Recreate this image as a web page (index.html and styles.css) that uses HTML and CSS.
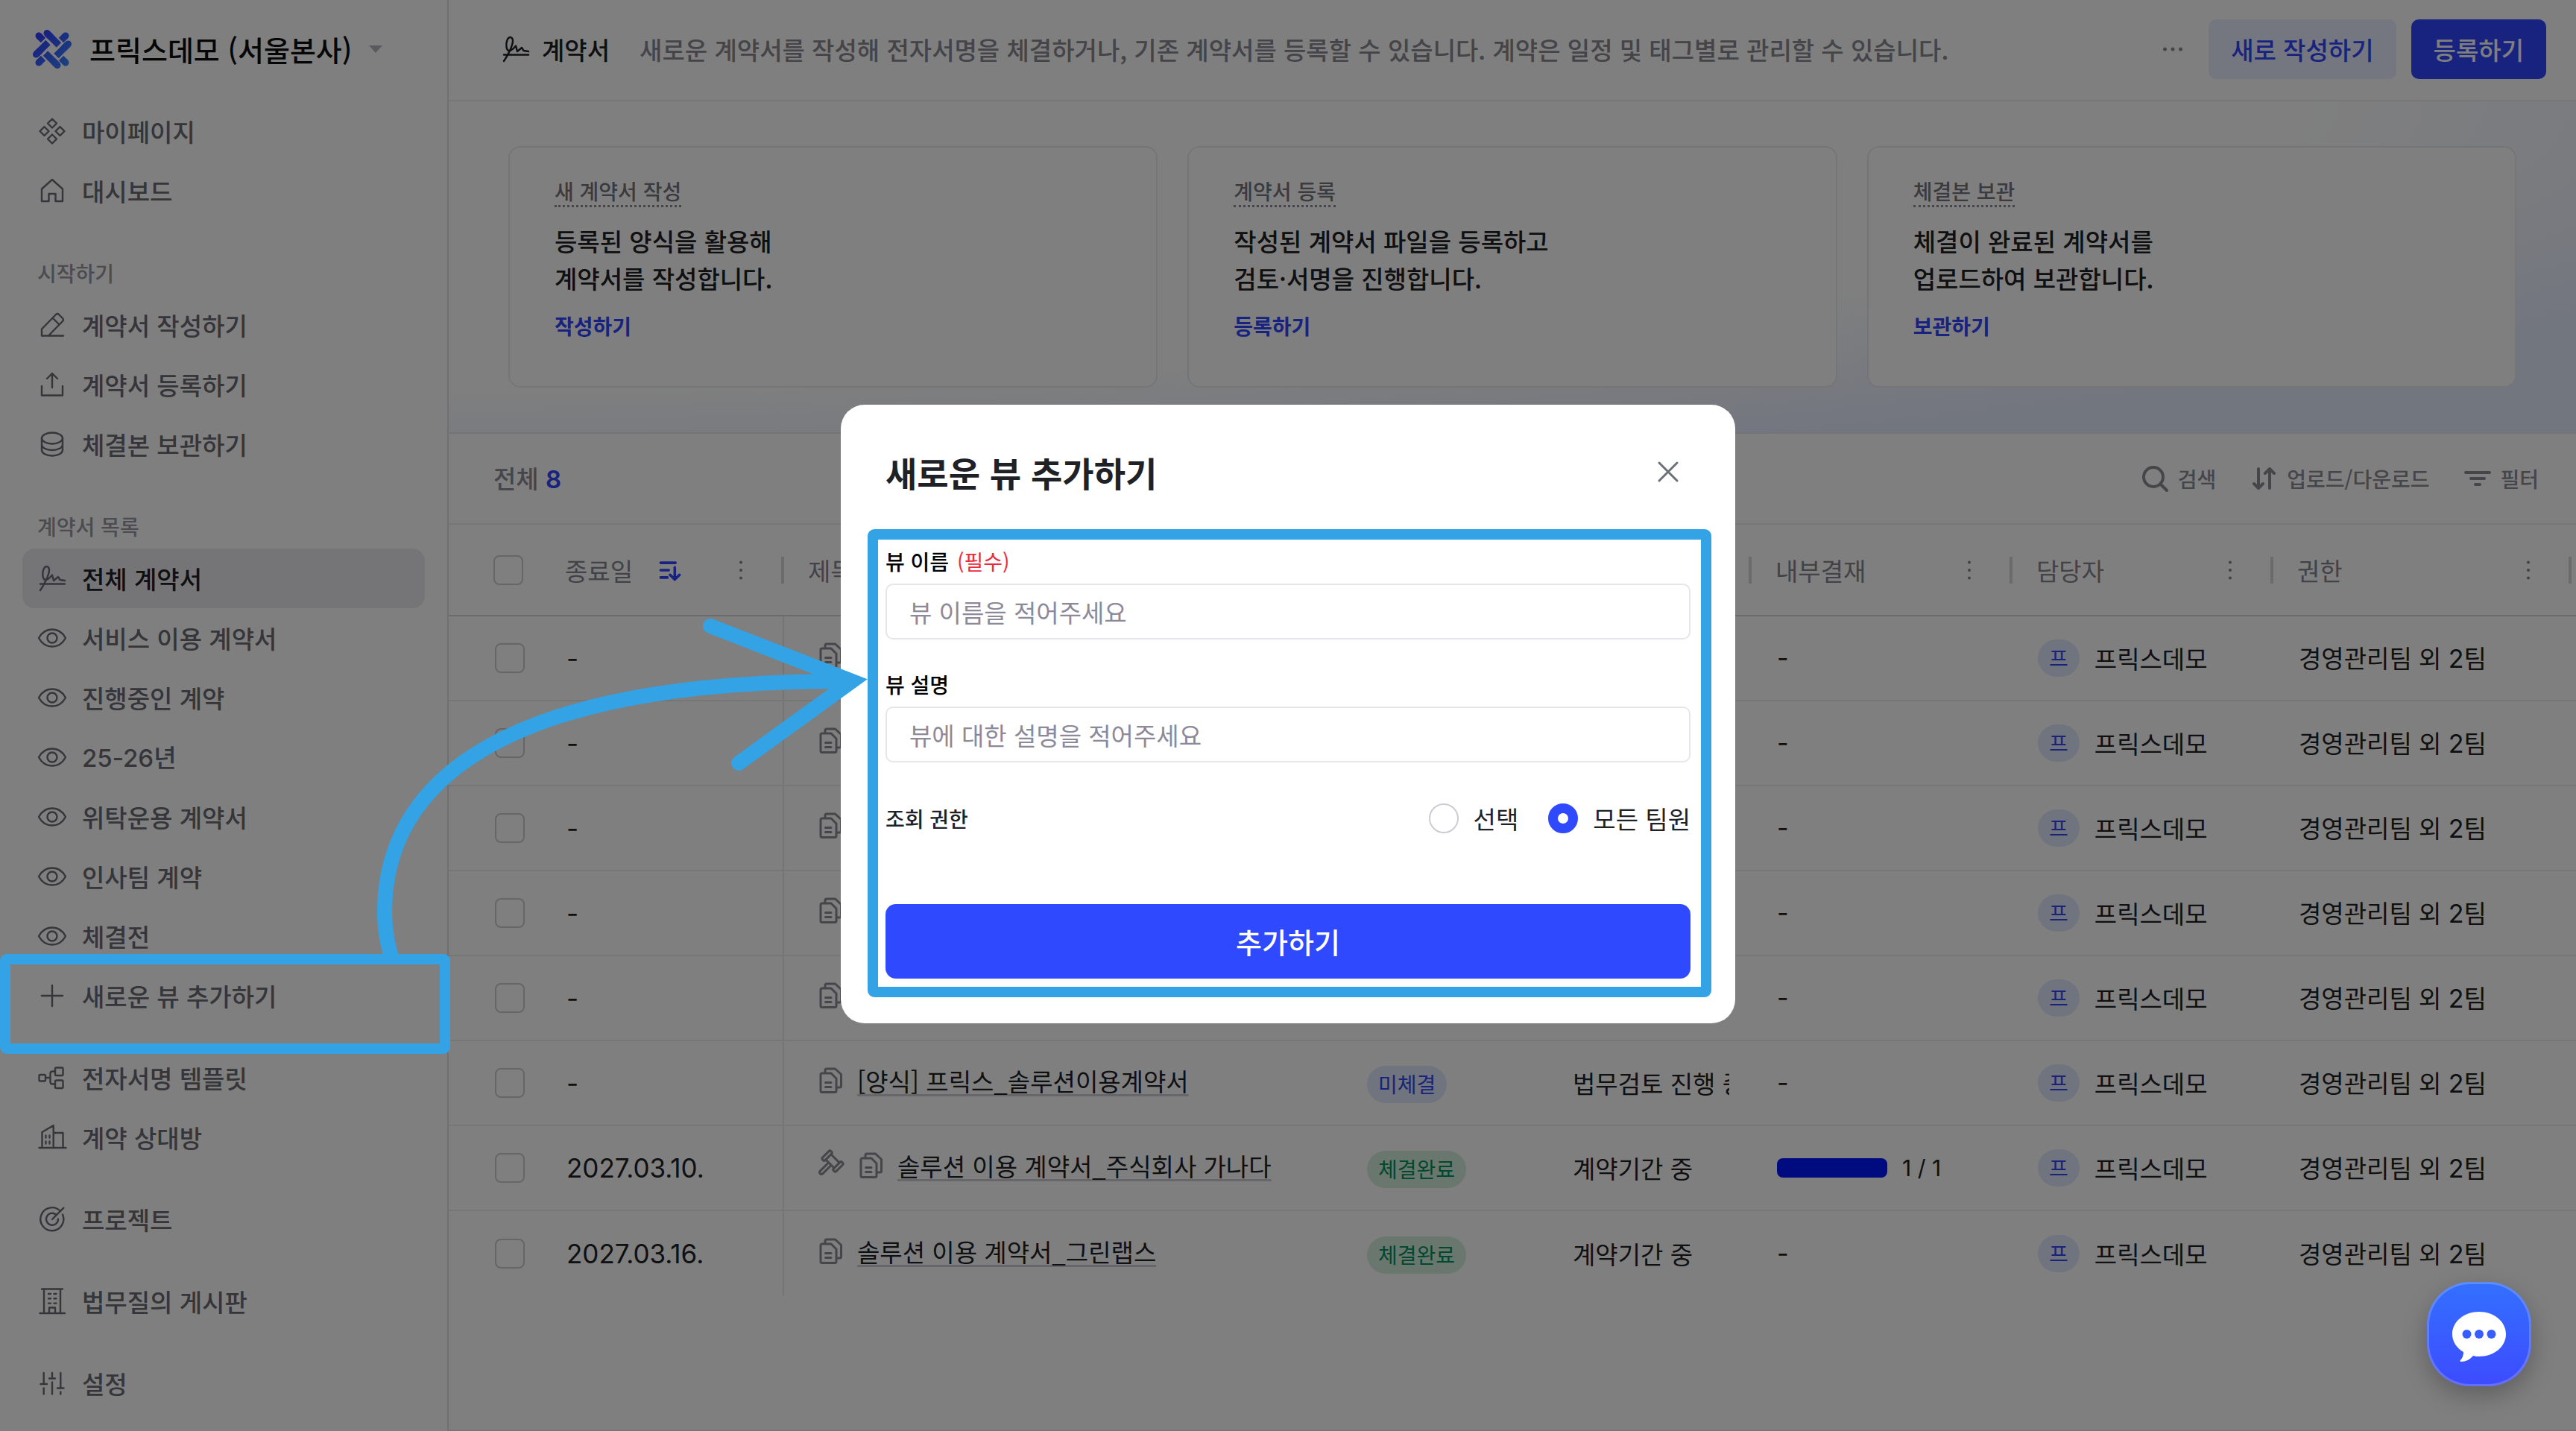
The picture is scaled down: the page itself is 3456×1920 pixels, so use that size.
FILE: index.html
```html
<!DOCTYPE html>
<html lang="ko">

<head>
  <meta charset="UTF-8">
  <title>계약서</title>
  <link rel="stylesheet" href="styles.css">
</head>

<body>
  <svg class="sprite" aria-hidden="true">
    <defs>
      <linearGradient id="logoFill" x1="0" y1="0" x2="52" y2="52" gradientUnits="userSpaceOnUse">
        <stop offset="0" stop-color="#2f33ff" />
        <stop offset="1" stop-color="#3d8aff" />
      </linearGradient>
    </defs>
    <symbol id="i-apps" viewBox="0 0 40 40">
      <path d="M20 3.500l6 6-6 6-6-6zM20 24.500l6 6-6 6-6-6zM9.500 14l6 6-6 6-6-6zM30.500 14l6 6-6 6-6-6z" />
    </symbol>
    <symbol id="i-home" viewBox="0 0 40 40">
      <path d="M6 34V17.500L20 5l14 12.500V34H24.500V24h-9v10z" />
    </symbol>
    <symbol id="i-pencil" viewBox="0 0 40 40">
      <path d="M35 34.500H6V25.500L25 6q2-2 4 0l5 5q2 2 0 4L15 34.500M20.500 10.500l9 9" />
    </symbol>
    <symbol id="i-upload" viewBox="0 0 40 40">
      <path d="M20 24V5M13 12l7-7 7 7M6 22v12.500h28V22" />
    </symbol>
    <symbol id="i-db" viewBox="0 0 40 40">
      <ellipse cx="20" cy="12" rx="14" ry="7.500" />
      <path d="M6 12v16c0 4 6 7.500 14 7.500s14-3.500 14-7.500V12M6 20.500c0 4 6 7.500 14 7.500s14-3.500 14-7.500" />
    </symbol>
    <symbol id="i-sign" viewBox="0 0 40 40">
      <path d="M4 36C9 29 16 15 16 9C16 5.500 14.500 4 12.500 4C9 4 6.500 11 7.500 17C8.500 24 13 24 20 15.500L22 23L28 18L30.500 22L37 23M4 27.500H37" />
    </symbol>
    <symbol id="i-eye" viewBox="0 0 40 40">
      <path d="M2 20C6 12.500 12 8.500 20 8.500S34 12.500 38 20C34 27.500 28 31.500 20 31.500S6 27.500 2 20Z" />
      <circle cx="20" cy="20" r="6.500" />
    </symbol>
    <symbol id="i-plus" viewBox="0 0 40 40">
      <path d="M20 6v28M6 20h28" />
    </symbol>
    <symbol id="i-flow" viewBox="0 0 40 40">
      <rect x="2.500" y="16" width="8.500" height="8.500" rx="1.500" />
      <rect x="24" y="6.500" width="10.500" height="10.500" rx="1.500" />
      <rect x="24" y="23.500" width="10.500" height="10.500" rx="1.500" />
      <path d="M11 20h6.500M24 11.500h-3.500q-3 0-3 3v11q0 3 3 3h3.500" />
    </symbol>
    <symbol id="i-company" viewBox="0 0 40 40">
      <path d="M2.500 34h36M6.500 34V13L21.700 4v30M21.700 14H34.500v20M11.500 17.500v3M16.500 17.500v3M11.500 25.500v3M16.500 25.500v3" />
    </symbol>
    <symbol id="i-target" viewBox="0 0 40 40">
      <path d="M30.500 8.500A15.500 15.500 0 1 0 34 13.500M25 13.500A8 8 0 1 0 28 19.500M20 20L35.300 4.700" />
    </symbol>
    <symbol id="i-board" viewBox="0 0 40 40">
      <path d="M6 3.500h28M9 3.500v32.500M31 3.500v32.500M3.500 36h33.500M16 36v-7.500h8V36M15 10h3M22.500 10h3M15 16.300h3M22.500 16.300h3M15 22.600h3M22.500 22.600h3" />
    </symbol>
    <symbol id="i-settings" viewBox="0 0 40 40">
      <path d="M8.700 6v15M4.500 21h8.500M8.700 26.500v8M20 6v7.500M16 13.500h8M20 18.500v16M31.300 6v20.500M27 26.500h8.500M31.300 31.500v3" />
    </symbol>
    <symbol id="i-docs" viewBox="0 0 36 36">
      <path d="M5 10q0-2 2-2h12l7 7v16.500q0 2-2 2H7q-2 0-2-2zM11 7.500V4q0-2 2-2h11.500l8 7.500V25q0 2-2 2h-3.500M11.500 20.500h7.500M11.500 26.500h7.500" />
    </symbol>
    <symbol id="i-gavel" viewBox="0 0 36 36">
      <g transform="rotate(45 21 12)">
        <rect x="8" y="4" width="5" height="16" rx="2" />
        <rect x="29" y="4" width="5" height="16" rx="2" />
        <path d="M13 7h16M13 17h16M18.500 17v16q0 2.500 2.500 2.500t2.500-2.500V17" />
      </g>
    </symbol>
    <symbol id="i-sort" viewBox="0 0 40 40">
      <path d="M6 9h22M6 20h12M6 31h10M27 16v18M20 27l7 7 7-7" />
    </symbol>
    <symbol id="i-dots" viewBox="0 0 8 28">
      <circle cx="4" cy="3.500" r="2" />
      <circle cx="4" cy="14" r="2" />
      <circle cx="4" cy="24.500" r="2" />
    </symbol>
  </svg>

  <div class="page">
    <aside class="sidebar">
      <button class="workspace" type="button">
        <svg class="logo" viewBox="0 0 52 52" aria-hidden="true">
          <path class="bars" d="M19 4.500L35 20.500M4.500 33L20.500 17M47.500 19L31.500 35M33 47.500L17 31.500M8 8l6 6M44 8l-6 6M8 44l6-6M44 44l-6-6" />
          <path d="M19 4.500l5 5M4.500 33l5-5M47.500 19l-5 5M33 47.500l-5-5M8 8l1 1M44 8l-1 1M8 44l1-1M44 44l-1-1" />
        </svg>
        <span>프릭스데모 (서울본사)</span>
        <svg class="caret" viewBox="0 0 20 10" aria-hidden="true">
          <path d="M1 0h18L10 10z" />
        </svg>
      </button>

      <nav>
        <a class="navItem" href="#"><svg class="icon"><use href="#i-apps" /></svg>마이페이지</a>
        <a class="navItem" href="#"><svg class="icon"><use href="#i-home" /></svg>대시보드</a>
      </nav>
      <nav>
        <h2 class="navLabel">시작하기</h2>
        <a class="navItem" href="#"><svg class="icon"><use href="#i-pencil" /></svg>계약서 작성하기</a>
        <a class="navItem" href="#"><svg class="icon"><use href="#i-upload" /></svg>계약서 등록하기</a>
        <a class="navItem" href="#"><svg class="icon"><use href="#i-db" /></svg>체결본 보관하기</a>
      </nav>
      <nav>
        <h2 class="navLabel">계약서 목록</h2>
        <a class="navItem active" href="#"><svg class="icon"><use href="#i-sign" /></svg>전체 계약서</a>
        <a class="navItem" href="#"><svg class="icon"><use href="#i-eye" /></svg>서비스 이용 계약서</a>
        <a class="navItem" href="#"><svg class="icon"><use href="#i-eye" /></svg>진행중인 계약</a>
        <a class="navItem" href="#"><svg class="icon"><use href="#i-eye" /></svg><span><span class="num">25-26</span>년</span></a>
        <a class="navItem" href="#"><svg class="icon"><use href="#i-eye" /></svg>위탁운용 계약서</a>
        <a class="navItem" href="#"><svg class="icon"><use href="#i-eye" /></svg>인사팀 계약</a>
        <a class="navItem" href="#"><svg class="icon"><use href="#i-eye" /></svg>체결전</a>
        <a class="navItem" href="#"><svg class="icon"><use href="#i-plus" /></svg>새로운 뷰 추가하기</a>
      </nav>
      <nav>
        <a class="navItem" href="#"><svg class="icon"><use href="#i-flow" /></svg>전자서명 템플릿</a>
        <a class="navItem" href="#"><svg class="icon"><use href="#i-company" /></svg>계약 상대방</a>
      </nav>
      <nav>
        <a class="navItem" href="#"><svg class="icon"><use href="#i-target" /></svg>프로젝트</a>
      </nav>
      <nav>
        <a class="navItem" href="#"><svg class="icon"><use href="#i-board" /></svg>법무질의 게시판</a>
      </nav>
      <nav>
        <a class="navItem" href="#"><svg class="icon"><use href="#i-settings" /></svg>설정</a>
      </nav>
    </aside>

    <main class="main">
      <header class="topbar">
        <svg class="icon"><use href="#i-sign" /></svg>
        <h1>계약서</h1>
        <p>새로운 계약서를 작성해 전자서명을 체결하거나, 기존 계약서를 등록할 수 있습니다. 계약은 일정 및 태그별로 관리할 수 있습니다.</p>
        <button class="more" type="button" aria-label="더보기">
          <svg viewBox="0 0 28 8">
            <circle cx="3.500" cy="4" r="2.500" />
            <circle cx="14" cy="4" r="2.500" />
            <circle cx="24.500" cy="4" r="2.500" />
          </svg>
        </button>
        <button class="btn btnLight" type="button">새로 작성하기</button>
        <button class="btn" type="button">등록하기</button>
      </header>

      <section class="hero">
        <div class="card">
          <h3>새 계약서 작성</h3>
          <p>등록된 양식을 활용해<br>계약서를 작성합니다.</p>
          <a href="#">작성하기</a>
        </div>
        <div class="card">
          <h3>계약서 등록</h3>
          <p>작성된 계약서 파일을 등록하고<br>검토·서명을 진행합니다.</p>
          <a href="#">등록하기</a>
        </div>
        <div class="card">
          <h3>체결본 보관</h3>
          <p>체결이 완료된 계약서를<br>업로드하여 보관합니다.</p>
          <a href="#">보관하기</a>
        </div>
      </section>

      <div class="toolbar">
        <p class="total">전체 <strong class="num">8</strong></p>
        <button class="tool" type="button">
          <svg viewBox="0 0 40 40"><circle cx="17" cy="18" r="13" /><path d="M27 28l8 8" /></svg>검색
        </button>
        <button class="tool" type="button">
          <svg viewBox="0 0 40 40"><path d="M12 7v26M6 27l6 6 6-6M27 33V7M21 13l6-6 6 6" /></svg>업로드/다운로드
        </button>
        <button class="tool" type="button">
          <svg viewBox="0 0 40 40"><path d="M4 12h32M11 20h18M17 28h6" /></svg>필터
        </button>
      </div>

      <table class="contracts">
        <colgroup>
          <col class="cCheck">
          <col class="cDate">
          <col class="cTitle">
          <col class="cStatus">
          <col class="cStep">
          <col class="cApproval">
          <col class="cOwner">
          <col class="cTeam">
          <col>
        </colgroup>
        <thead>
          <tr>
            <th class="pick"><input type="checkbox" aria-label="전체 선택"></th>
            <th>
              <div class="head flush"><span>종료일</span><svg class="sort"><use href="#i-sort" /></svg><svg class="dots"><use href="#i-dots" /></svg></div>
            </th>
            <th><div class="head"><span>제목</span></div></th>
            <th></th>
            <th><div class="head"></div></th>
            <th><div class="head"><span>내부결재</span><svg class="dots"><use href="#i-dots" /></svg></div></th>
            <th><div class="head"><span>담당자</span><svg class="dots"><use href="#i-dots" /></svg></div></th>
            <th><div class="head"><span>권한</span><svg class="dots"><use href="#i-dots" /></svg></div></th>
            <th></th>
          </tr>
        </thead>
        <tbody>
          <tr>
            <td class="pick"><input type="checkbox" aria-label="선택"></td>
            <td class="date">-</td>
            <td><div class="title"><svg><use href="#i-docs" /></svg></div></td>
            <td></td>
            <td></td>
            <td class="num">-</td>
            <td><div class="owner"><span class="badge">프</span>프릭스데모</div></td>
            <td>경영관리팀 외 <span class="num">2</span>팀</td>
            <td></td>
          </tr>
          <tr>
            <td class="pick"><input type="checkbox" aria-label="선택"></td>
            <td class="date">-</td>
            <td><div class="title"><svg><use href="#i-docs" /></svg></div></td>
            <td></td>
            <td></td>
            <td class="num">-</td>
            <td><div class="owner"><span class="badge">프</span>프릭스데모</div></td>
            <td>경영관리팀 외 <span class="num">2</span>팀</td>
            <td></td>
          </tr>
          <tr>
            <td class="pick"><input type="checkbox" aria-label="선택"></td>
            <td class="date">-</td>
            <td><div class="title"><svg><use href="#i-docs" /></svg></div></td>
            <td></td>
            <td></td>
            <td class="num">-</td>
            <td><div class="owner"><span class="badge">프</span>프릭스데모</div></td>
            <td>경영관리팀 외 <span class="num">2</span>팀</td>
            <td></td>
          </tr>
          <tr>
            <td class="pick"><input type="checkbox" aria-label="선택"></td>
            <td class="date">-</td>
            <td><div class="title"><svg><use href="#i-docs" /></svg></div></td>
            <td></td>
            <td></td>
            <td class="num">-</td>
            <td><div class="owner"><span class="badge">프</span>프릭스데모</div></td>
            <td>경영관리팀 외 <span class="num">2</span>팀</td>
            <td></td>
          </tr>
          <tr>
            <td class="pick"><input type="checkbox" aria-label="선택"></td>
            <td class="date">-</td>
            <td><div class="title"><svg><use href="#i-docs" /></svg></div></td>
            <td></td>
            <td></td>
            <td class="num">-</td>
            <td><div class="owner"><span class="badge">프</span>프릭스데모</div></td>
            <td>경영관리팀 외 <span class="num">2</span>팀</td>
            <td></td>
          </tr>
          <tr>
            <td class="pick"><input type="checkbox" aria-label="선택"></td>
            <td class="date">-</td>
            <td><div class="title"><svg><use href="#i-docs" /></svg><a href="#">[양식] 프릭스_솔루션이용계약서</a></div></td>
            <td><span class="badge">미체결</span></td>
            <td><div class="clip">법무검토 진행 중</div></td>
            <td class="num">-</td>
            <td><div class="owner"><span class="badge">프</span>프릭스데모</div></td>
            <td>경영관리팀 외 <span class="num">2</span>팀</td>
            <td></td>
          </tr>
          <tr>
            <td class="pick"><input type="checkbox" aria-label="선택"></td>
            <td class="date">2027.03.10.</td>
            <td><div class="title"><svg><use href="#i-gavel" /></svg><svg><use href="#i-docs" /></svg><a href="#">솔루션 이용 계약서_주식회사 가나다</a></div></td>
            <td><span class="badge done">체결완료</span></td>
            <td><div class="clip">계약기간 중</div></td>
            <td><div class="progress"><span class="bar"></span><span class="count">1 / 1</span></div></td>
            <td><div class="owner"><span class="badge">프</span>프릭스데모</div></td>
            <td>경영관리팀 외 <span class="num">2</span>팀</td>
            <td></td>
          </tr>
          <tr>
            <td class="pick"><input type="checkbox" aria-label="선택"></td>
            <td class="date">2027.03.16.</td>
            <td><div class="title"><svg><use href="#i-docs" /></svg><a href="#">솔루션 이용 계약서_그린랩스</a></div></td>
            <td><span class="badge done">체결완료</span></td>
            <td><div class="clip">계약기간 중</div></td>
            <td class="num">-</td>
            <td><div class="owner"><span class="badge">프</span>프릭스데모</div></td>
            <td>경영관리팀 외 <span class="num">2</span>팀</td>
            <td></td>
          </tr>
        </tbody>
      </table>
    </main>
  </div>

  <div class="overlay">
    <form class="modal" role="dialog" aria-labelledby="modalTitle">
      <div class="modalHead">
        <h2 id="modalTitle">새로운 뷰 추가하기</h2>
        <button class="close" type="button" aria-label="닫기">
          <svg viewBox="0 0 40 40"><path d="M8 8l24 24M32 8L8 32" /></svg>
        </button>
      </div>
      <div class="field">
        <label for="viewName">뷰 이름 <em>(필수)</em></label>
        <input type="text" id="viewName" placeholder="뷰 이름을 적어주세요">
      </div>
      <div class="field">
        <label for="viewDesc">뷰 설명</label>
        <input type="text" id="viewDesc" placeholder="뷰에 대한 설명을 적어주세요">
      </div>
      <div class="access">
        <span class="accessLabel">조회 권한</span>
        <label><input type="radio" name="access">선택</label>
        <label><input type="radio" name="access" checked>모든 팀원</label>
      </div>
      <button class="submit" type="submit">추가하기</button>
    </form>
  </div>

  <button class="chat" type="button" aria-label="채팅 상담">
    <svg viewBox="0 0 72 68">
      <path d="M36 0C56 0 72 13 72 30S56 60 36 60C33 60 31 60 28 59C24 64 18 67 12 67C10 67 10 66 11 65C14 62 15 58 15 54C6 49 0 40 0 30C0 13 16 0 36 0Z" />
      <circle cx="19.500" cy="30" r="6" />
      <circle cx="36" cy="30" r="6" />
      <circle cx="52.500" cy="30" r="6" />
    </svg>
  </button>

  <!-- guide marks -->
  <svg class="guide" viewBox="0 0 3456 1920" aria-hidden="true">
    <rect x="7" y="1287" width="590" height="120" rx="2" />
    <rect x="1171" y="717" width="1118" height="614" rx="2" />
    <path class="arrow" d="M525 1284Q516 1254 516 1224C516 1040 690 914 1130 914" />
    <path class="arrow" d="M953 840L1143 914L991 1024" />
  </svg>
</body>

</html>
```
FILE: styles.css
```css
* {
  box-sizing: border-box;
}

body {
  margin: 0;
  font-family: "Noto Sans CJK KR", sans-serif;
  font-size: 33px;
  line-height: 50px;
  color: #1e2125;
  background: #fff;
}

h1, h2, h3, p {
  margin: 0;
  font-weight: 500;
}

a {
  color: inherit;
  text-decoration: none;
}

button {
  padding: 0;
  border: none;
  background: none;
  font: inherit;
  font-weight: 500;
  cursor: pointer;
}

svg {
  display: block;
  flex: none;
  overflow: visible;
  fill: none;
  stroke: currentColor;
  stroke-linecap: round;
  stroke-linejoin: round;
}

symbol {
  overflow: visible;
}

.sprite {
  position: absolute;
  width: 0;
  height: 0;
}

.num, .date {
  font-family: "Inter", "Noto Sans CJK KR", sans-serif;
}

.icon {
  width: 40px;
  height: 40px;
  stroke-width: 2.4px;
}

.page {
  display: flex;
  min-height: 100vh;
}

/* sidebar */

.sidebar {
  flex: none;
  display: flex;
  flex-direction: column;
  gap: 30px;
  width: 602px;
  padding: 0 30px;
  border-right: 2px solid #e0e0e4;
}

.workspace {
  display: flex;
  align-items: center;
  height: 106px;
  padding: 26px 0 0 14px;
  font-size: 38px;
  color: #0c0d0f;
}

.logo {
  width: 52px;
  height: 52px;
  margin-right: 24px;
  stroke: url(#logoFill);
  stroke-width: 9px;
}

.bars {
  stroke-linecap: butt;
}

.caret {
  width: 20px;
  height: 10px;
  margin-left: 22px;
  fill: #b4b4bc;
  stroke: none;
}

.navLabel {
  height: 70px;
  padding: 10px 20px 0;
  font-size: 28px;
  line-height: 60px;
  color: #9696a0;
}

.navItem {
  display: flex;
  align-items: center;
  gap: 20px;
  height: 80px;
  padding: 0 20px;
  border-radius: 16px;
  font-weight: 500;
  line-height: 48px;
  color: #6a6b74;
}

.navItem.active {
  background: #ebebef;
  color: #1e2125;
}

.navItem.active .icon {
  color: #6a6b74;
}

/* main */

.main {
  flex: 1;
  min-width: 0;
  border-bottom: 2px solid #ececee;
}

.topbar {
  display: flex;
  align-items: center;
  height: 136px;
  padding: 0 40px 2px 70px;
  border-bottom: 2px solid #ededf0;
}

.topbar h1 {
  margin: 0 40px 0 15px;
  font-size: 33px;
}

.topbar p {
  flex: 1;
  color: #888892;
}

.more {
  display: flex;
  align-items: center;
  height: 80px;
  margin-right: 34px;
  color: #8c8c94;
}

.more svg {
  width: 28px;
  height: 8px;
  fill: currentColor;
  stroke: none;
}

.btn {
  height: 80px;
  padding: 0 30px;
  border-radius: 10px;
  background: #3144ff;
  color: #fff;
}

.btnLight {
  margin-right: 20px;
  background: #e8efff;
  color: #3144ff;
}

.hero {
  display: grid;
  grid-template-columns: repeat(3, 1fr);
  gap: 40px;
  padding: 60px 80px;
  border-bottom: 2px solid #e8e8ec;
  background: radial-gradient(ellipse farthest-side at 0 0, #fff 86%, #e5ecff 120%);
}

.card {
  display: flex;
  flex-direction: column;
  align-items: flex-start;
  gap: 20px;
  height: 324px;
  padding: 40px 60px;
  border: 2px solid #ebebee;
  border-radius: 16px;
  background: #fff;
}

.card h3 {
  border-bottom: 3px dotted #8c8c94;
  font-size: 28px;
  line-height: 37px;
  color: #74757e;
}

.card p {
  font-size: 33px;
}

.card a {
  font-size: 28px;
  font-weight: 700;
  line-height: 38px;
  color: #3144ff;
}

.toolbar {
  display: flex;
  align-items: center;
  gap: 45px;
  height: 122px;
  padding: 0 50px 0 60px;
  border-bottom: 2px solid #ededf0;
}

.total {
  flex: 1;
  color: #8c8c94;
}

.total strong {
  font-weight: 600;
  color: #3144ff;
}

.tool {
  display: flex;
  align-items: center;
  gap: 10px;
  font-size: 28px;
  color: #8c8c94;
}

.tool svg {
  width: 40px;
  height: 40px;
  stroke-width: 4px;
}

/* table */

.contracts {
  width: 100%;
  table-layout: fixed;
  border-collapse: separate;
  border-spacing: 0;
}

.cCheck {
  width: 124px;
}

.cDate {
  width: 326px;
}

.cTitle {
  width: 748px;
}

.cStatus {
  width: 276px;
}

.cStep {
  width: 274px;
}

.cApproval, .cOwner {
  width: 350px;
}

.cTeam {
  width: 400px;
}

.contracts th {
  height: 123px;
  padding: 0;
  border-bottom: 2px solid #d6d6da;
  font-weight: 400;
  text-align: left;
  color: #84848e;
}

.contracts td {
  height: 114px;
  padding: 0 0 0 34px;
  border-bottom: 2px solid #ececee;
}

.contracts tr:last-child td {
  border-bottom: none;
}

.contracts td.date {
  border-right: 2px solid #ebebee;
}

.contracts th.pick {
  padding-left: 60px;
}

.contracts td.pick {
  padding-left: 62px;
}

.contracts .num {
  font-size: 34px;
}

.contracts .date {
  font-size: 35px;
}

input[type="checkbox"] {
  display: block;
  appearance: none;
  width: 40px;
  height: 40px;
  margin: 0;
  border: 2px solid #ccccd2;
  border-radius: 8px;
}

.head {
  display: flex;
  align-items: center;
  height: 36px;
  padding: 0 50px 0 32px;
  border-right: 4px solid #d6d6da;
}

.head.flush {
  gap: 30px;
}

.sort {
  width: 40px;
  height: 36px;
  stroke-width: 4px;
  color: #3144ff;
}

.dots {
  width: 8px;
  height: 28px;
  margin-left: auto;
  fill: currentColor;
  stroke: none;
}

.title {
  display: flex;
  align-items: center;
  gap: 18px;
  padding: 0 0 6px 10px;
}

.title svg {
  width: 36px;
  height: 36px;
  stroke-width: 3px;
  color: #8c8c94;
}

.title a {
  text-decoration: underline;
  text-decoration-color: #ccccd6;
  text-decoration-thickness: 3px;
  text-underline-offset: 4px;
}

.badge {
  display: inline-block;
  height: 50px;
  padding: 0 15px;
  border-radius: 28px;
  background: #dfe8fc;
  font-size: 28px;
  line-height: 48px;
  color: #3148f0;
}

.badge.done {
  background: #d2eedf;
  color: #00905c;
}

.clip {
  margin-right: 30px;
  overflow: hidden;
  white-space: nowrap;
}

.owner, .progress {
  display: flex;
  align-items: center;
  gap: 20px;
}

.bar {
  width: 148px;
  height: 26px;
  border-radius: 8px;
  background: #0016ff;
}

.count {
  font-family: "Inter", sans-serif;
  font-size: 30px;
}

/* modal */

.overlay {
  position: fixed;
  inset: 0;
  display: flex;
  align-items: center;
  justify-content: center;
  padding-bottom: 4px;
  background: rgba(0, 0, 0, .5);
}

.modal {
  display: flex;
  flex-direction: column;
  gap: 40px;
  width: 1200px;
  padding: 60px;
  border-radius: 32px;
  background: #fff;
}

.modalHead {
  display: flex;
  align-items: center;
  justify-content: space-between;
  height: 60px;
  margin-bottom: 30px;
}

.modalHead h2 {
  font-size: 46px;
  font-weight: 700;
  line-height: 60px;
}

.close {
  width: 40px;
  height: 40px;
  margin-right: 10px;
  color: #6a6f78;
}

.close svg {
  width: 40px;
  height: 40px;
  stroke-width: 3px;
}

.field {
  display: flex;
  flex-direction: column;
  gap: 10px;
}

.field label {
  font-size: 28px;
  font-weight: 500;
  line-height: 40px;
  color: #000;
}

.field em {
  margin-left: 3px;
  font-style: normal;
  font-weight: 400;
  color: #f0283c;
}

.field input {
  height: 75px;
  padding: 0 30px;
  border: 2px solid #e6e6ea;
  border-radius: 10px;
  font: inherit;
}

.field input::placeholder {
  color: #8c8a9a;
}

.access {
  display: flex;
  align-items: center;
  gap: 40px;
  height: 70px;
  margin-bottom: 40px;
}

.accessLabel {
  flex: 1;
  font-size: 28px;
  font-weight: 500;
}

.access label {
  display: flex;
  align-items: center;
  gap: 20px;
}

input[type="radio"] {
  appearance: none;
  width: 40px;
  height: 40px;
  margin: 0;
  border: 2px solid #ccccd6;
  border-radius: 50%;
}

input[type="radio"]:checked {
  border: 13px solid #2f49ff;
}

.submit {
  height: 100px;
  border-radius: 14px;
  background: #2f49ff;
  font-size: 38px;
  color: #fff;
}

.chat {
  position: fixed;
  right: 60px;
  bottom: 60px;
  display: flex;
  align-items: center;
  justify-content: center;
  width: 140px;
  height: 140px;
  padding-top: 8px;
  border: 3px solid rgba(255, 255, 255, .2);
  border-radius: 58px;
  background: linear-gradient(#3370ff, #3d4bff) border-box;
  box-shadow: 0 12px 32px rgba(0, 0, 0, .25);
}

.chat svg {
  width: 72px;
  height: 68px;
  fill: #fff;
  stroke: none;
}

.chat circle {
  fill: #375fff;
}

.guide {
  position: absolute;
  inset: 0;
  width: 100%;
  pointer-events: none;
  stroke: #33a3e6;
  stroke-width: 14px;
}

.guide .arrow {
  stroke-width: 20px;
  stroke-linejoin: miter;
}
```
